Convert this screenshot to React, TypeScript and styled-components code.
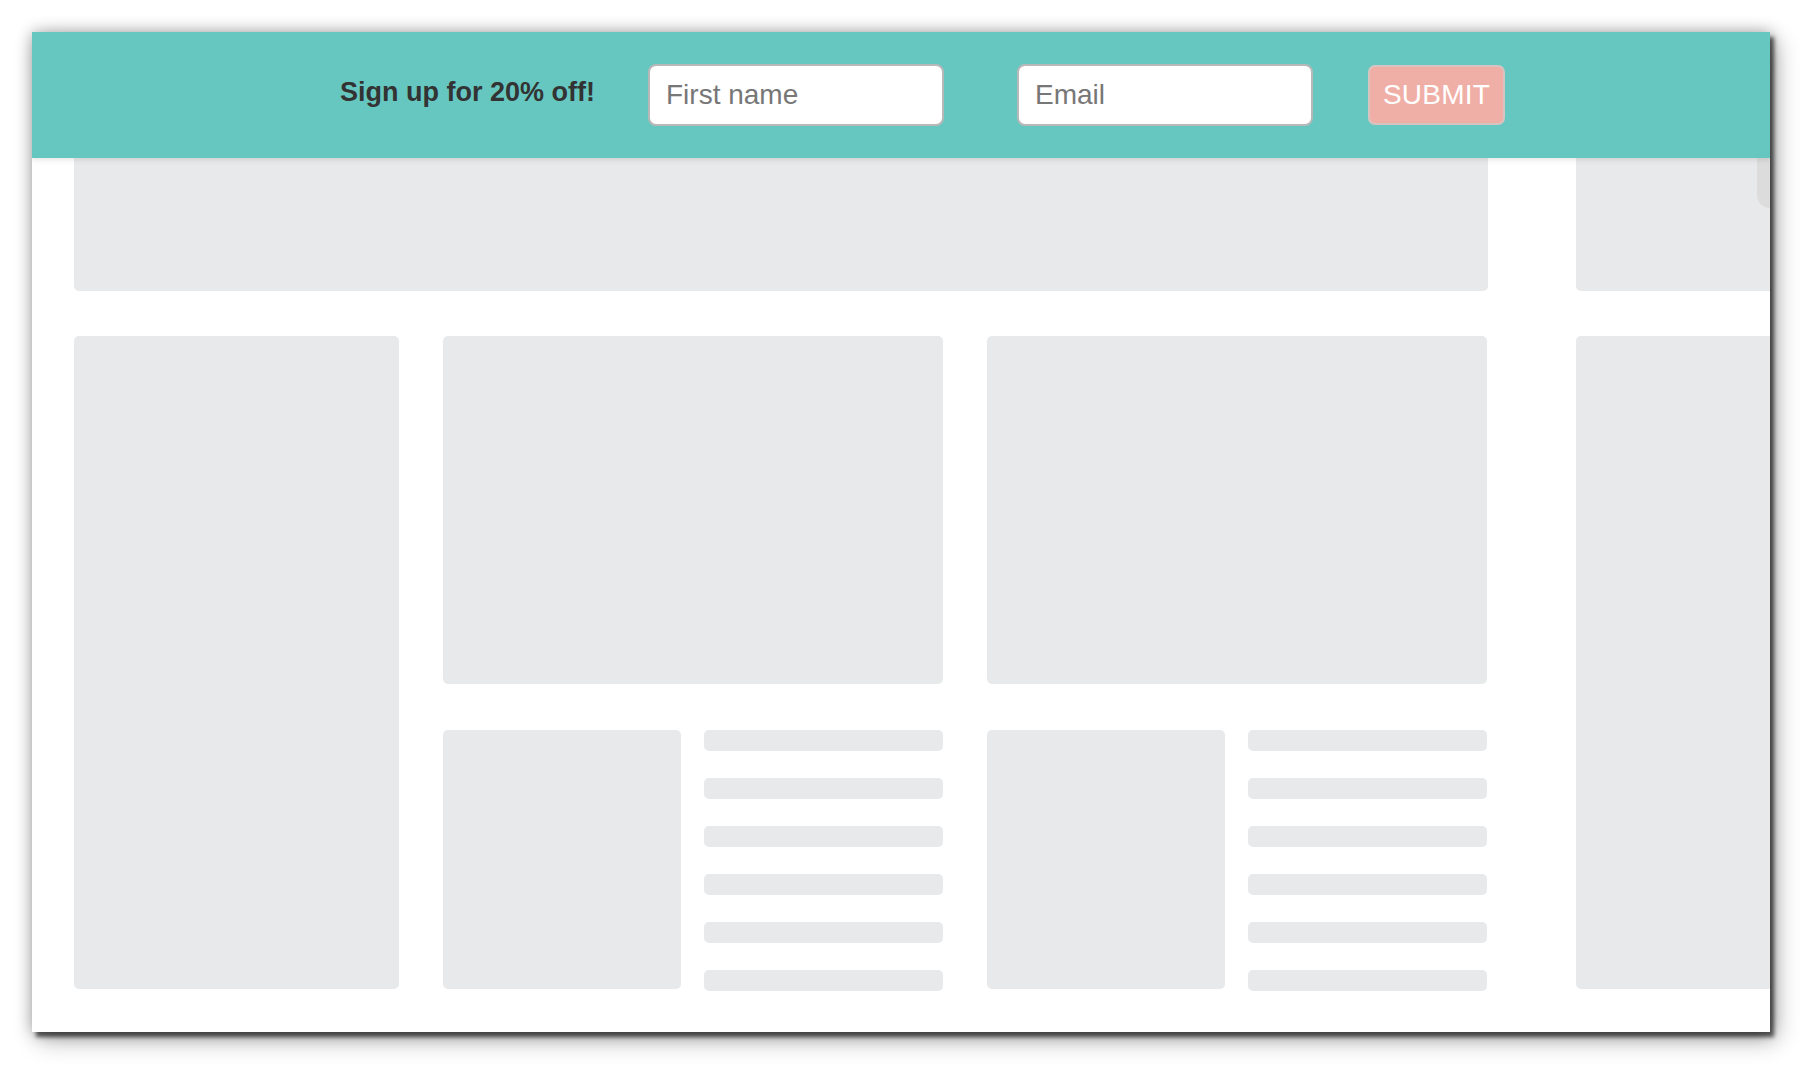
import styled, { createGlobalStyle } from 'styled-components';

const GlobalStyle = createGlobalStyle`
    html, body {
        margin: 0;
        padding: 0;
        background: #ffffff;
    }
    body {
        font-family: "Liberation Sans", Arial, sans-serif;
    }
`;

const Page = styled.div`
    width: 1810px;
    height: 1072px;
    padding: 32px;
    box-sizing: border-box;
    overflow: hidden;
`;

const Window = styled.div`
    width: 1738px;
    height: 1000px;
    background: #ffffff;
    display: flex;
    flex-direction: column;
    overflow: hidden;
    box-shadow: 0 0 14px rgba(0, 0, 0, 0.28), 4px 5px 4px rgba(0, 0, 0, 0.6),
        6px 8px 22px rgba(0, 0, 0, 0.32);
`;

const Banner = styled.form`
    position: relative;
    z-index: 2;
    flex: 0 0 126px;
    background: #66c7c1;
    display: flex;
    align-items: center;
    padding-left: 308px;
    box-shadow: 0 2px 5px rgba(0, 0, 0, 0.1);
`;

const Pitch = styled.span`
    font-size: 27px;
    font-weight: bold;
    color: #333333;
    margin-right: 53px;
    margin-top: -5px;
`;

const Field = styled.input<{ $gap: number }>`
    width: 296px;
    height: 62px;
    box-sizing: border-box;
    border: 2px solid #b8b8b8;
    border-radius: 8px;
    background: #ffffff;
    padding: 0 16px;
    margin-right: ${(p) => p.$gap}px;
    font-family: "Liberation Sans", Arial, sans-serif;
    font-size: 28px;
    color: #333;
    outline: none;

    &::placeholder {
        color: #777777;
    }
`;

const Submit = styled.button`
    height: 60px;
    box-sizing: border-box;
    padding: 0 13px;
    border: 2px solid #d7c4c1;
    border-radius: 7px;
    background: #f0afa6;
    color: #ffffff;
    font-family: "Liberation Sans", Arial, sans-serif;
    font-size: 28px;
    letter-spacing: 0.2px;
`;

const Content = styled.div`
    position: relative;
    flex: 1;
    display: flex;
    gap: 88px;
    padding: 0 0 0 42px;
    overflow: hidden;
`;

const Group = styled.div<{ $width: number }>`
    flex: 0 0 ${(p) => p.$width}px;
    display: flex;
    flex-direction: column;
    gap: 45px;
`;

const Block = styled.div<{ $w?: number; $h?: number; $cut?: boolean }>`
    background: #e8e9eb;
    border-radius: ${(p) => (p.$cut ? '0 0 5px 5px' : '5px')};
    width: ${(p) => (p.$w ? `${p.$w}px` : 'auto')};
    height: ${(p) => (p.$h ? `${p.$h}px` : 'auto')};
    flex-shrink: 0;
`;

const Row = styled.div`
    display: flex;
    gap: 44px;
    height: 653px;
`;

const Column = styled.div<{ $width: number }>`
    width: ${(p) => p.$width}px;
    display: flex;
    flex-direction: column;
    gap: 46px;
`;

const Card = styled.div`
    display: flex;
    gap: 23px;
    height: 259px;
`;

const Lines = styled.div`
    flex: 1;
    display: flex;
    flex-direction: column;
    justify-content: space-between;
    margin-bottom: -2px;
`;

const Line = styled.div`
    height: 21px;
    border-radius: 5px;
    background: #e8e9eb;
`;

const ScrollThumb = styled.div`
    position: absolute;
    top: 0;
    right: 0;
    width: 13px;
    height: 50px;
    background: #dcdcdc;
    border-radius: 0 0 0 14px;
`;

function TeaserCard() {
    return (
        <Card>
            <Block $w={238} />
            <Lines>
                {Array.from({ length: 6 }).map((_, i) => (
                    <Line key={i} />
                ))}
            </Lines>
        </Card>
    );
}

function FeatureColumn() {
    return (
        <Column $width={500}>
            <Block $h={348} />
            <TeaserCard />
        </Column>
    );
}

export default function App() {
    return (
        <Page>
            <GlobalStyle />
            <Window>
                <Banner onSubmit={(e) => e.preventDefault()}>
                    <Pitch>Sign up for 20% off!</Pitch>
                    <Field $gap={73} type="text" placeholder="First name" />
                    <Field $gap={55} type="email" placeholder="Email" />
                    <Submit type="submit">SUBMIT</Submit>
                </Banner>
                <Content>
                    <Group $width={1414}>
                        <Block $h={133} $cut />
                        <Row>
                            <Block $w={325} />
                            <FeatureColumn />
                            <FeatureColumn />
                        </Row>
                    </Group>
                    <Group $width={325}>
                        <Block $h={133} $cut />
                        <Block $h={653} />
                    </Group>
                    <ScrollThumb />
                </Content>
            </Window>
        </Page>
    );
}
